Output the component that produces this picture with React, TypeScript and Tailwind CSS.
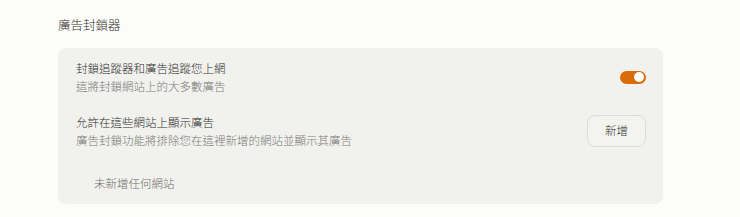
export default function App() {
  return (
    <div
      className="min-h-[217px] w-full bg-[#fcfcfa] pl-[58px] pt-[16px] font-light text-[#2f2f2d]"
      style={{ fontFamily: '"Noto Sans CJK TC", "Noto Sans", sans-serif' }}
    >
      <h2 className="text-[12.5px] leading-[18px] text-[#2f2f2d]">廣告封鎖器</h2>

      <div className="mt-[14px] w-[605px] rounded-[8px] bg-[#f1f1ed] px-[18px] pt-[11px] pb-[12px]">
        <div className="flex items-center justify-between">
          <div>
            <div className="text-[11.5px] leading-[18px] text-[#2f2f2d]">封鎖追蹤器和廣告追蹤您上網</div>
            <div className="text-[11.5px] leading-[18px] text-[#7a7a76]">這將封鎖網站上的大多數廣告</div>
          </div>
          <div className="mr-[-1px] flex h-[13px] w-[26px] items-center justify-end rounded-full bg-[#d96c06] pr-[2px]">
            <span className="h-[10px] w-[10px] rounded-full bg-white" />
          </div>
        </div>

        <div className="mt-[18px] flex items-center justify-between">
          <div>
            <div className="text-[11.5px] leading-[18px] text-[#2f2f2d]">允許在這些網站上顯示廣告</div>
            <div className="text-[11.5px] leading-[18px] text-[#7a7a76]">廣告封鎖功能將排除您在這裡新增的網站並顯示其廣告</div>
          </div>
          <button className="mr-[-1px] h-[32px] w-[59px] rounded-[8px] border border-[#dcdcd8] bg-[#f3f3ef] text-[11.5px] text-[#2f2f2d]">
            新增
          </button>
        </div>

        <div className="mt-[25px] pl-[18px] text-[11.5px] leading-[18px] text-[#6e6e6a]">未新增任何網站</div>
      </div>
    </div>
  );
}
